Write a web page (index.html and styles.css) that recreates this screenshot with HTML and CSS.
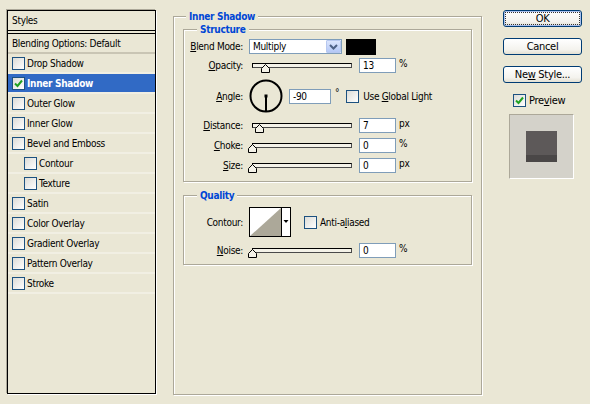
FILE: index.html
```html
<!DOCTYPE html>
<html>
<head>
<meta charset="utf-8">
<title>Layer Style</title>
<link rel="stylesheet" href="styles.css">
</head>
<body>
<div class="dialog">
  <div class="styles-panel">
    <div class="panel-head">Styles</div>
    <div class="panel-sep"></div>
    <div class="row blending">Blending Options: Default</div>
    <div class="row"><span class="cb"></span>Drop Shadow</div>
    <div class="row sel"><span class="cb"><svg width="9" height="9" viewBox="0 0 9 9"><path d="M1 4.5 L3.5 7 L8 1.5" fill="none" stroke="#21a121" stroke-width="2"/></svg></span>Inner Shadow</div>
    <div class="row"><span class="cb"></span>Outer Glow</div>
    <div class="row"><span class="cb"></span>Inner Glow</div>
    <div class="row"><span class="cb"></span>Bevel and Emboss</div>
    <div class="row sub"><span class="cb"></span>Contour</div>
    <div class="row sub"><span class="cb"></span>Texture</div>
    <div class="row"><span class="cb"></span>Satin</div>
    <div class="row"><span class="cb"></span>Color Overlay</div>
    <div class="row"><span class="cb"></span>Gradient Overlay</div>
    <div class="row"><span class="cb"></span>Pattern Overlay</div>
    <div class="row"><span class="cb"></span>Stroke</div>
  </div>

  <fieldset class="group outer">
    <legend>Inner Shadow</legend>
    <fieldset class="group structure">
      <legend>Structure</legend>
      <div class="frow r-blend">
        <span class="lbl"><u>B</u>lend Mode:</span>
        <div class="select"><span class="val">Multiply</span><span class="arrow"><svg width="9" height="6" viewBox="0 0 9 6"><path d="M1 1 L4.5 4.5 L8 1" fill="none" stroke="#4d6185" stroke-width="2"/></svg></span></div>
        <span class="swatch"></span>
      </div>
      <div class="frow r-slider first">
        <span class="lbl"><u>O</u>pacity:</span>
        <div class="slider"><div class="track"></div><svg class="thumb" style="left:9px" width="9" height="9" viewBox="0 0 9 9"><path d="M4.5 0.5 L8.5 4.5 L8.5 8.5 L0.5 8.5 L0.5 4.5 Z" fill="#f4f2e8" stroke="#000"/></svg></div>
        <span class="num">13</span><span class="unit">%</span>
      </div>
      <div class="frow r-angle">
        <span class="lbl"><u>A</u>ngle:</span>
        <svg class="dial" width="34" height="34" viewBox="0 0 34 34"><circle cx="17" cy="17" r="15.5" fill="none" stroke="#000" stroke-width="2"/><line x1="17" y1="17" x2="17" y2="32" stroke="#000" stroke-width="2"/><rect x="15.5" y="15.5" width="3" height="3" fill="#000"/></svg>
        <span class="num wide">-90</span><span class="deg">°</span>
        <span class="cb gl"></span><span class="cblabel">Use <u>G</u>lobal Light</span>
      </div>
      <div class="frow r-slider">
        <span class="lbl"><u>D</u>istance:</span>
        <div class="slider"><div class="track"></div><svg class="thumb" style="left:3px" width="9" height="9" viewBox="0 0 9 9"><path d="M4.5 0.5 L8.5 4.5 L8.5 8.5 L0.5 8.5 L0.5 4.5 Z" fill="#f4f2e8" stroke="#000"/></svg></div>
        <span class="num">7</span><span class="unit">px</span>
      </div>
      <div class="frow r-slider">
        <span class="lbl"><u>C</u>hoke:</span>
        <div class="slider"><div class="track"></div><svg class="thumb" style="left:-4px" width="9" height="9" viewBox="0 0 9 9"><path d="M4.5 0.5 L8.5 4.5 L8.5 8.5 L0.5 8.5 L0.5 4.5 Z" fill="#f4f2e8" stroke="#000"/></svg></div>
        <span class="num">0</span><span class="unit">%</span>
      </div>
      <div class="frow r-slider">
        <span class="lbl"><u>S</u>ize:</span>
        <div class="slider"><div class="track"></div><svg class="thumb" style="left:-4px" width="9" height="9" viewBox="0 0 9 9"><path d="M4.5 0.5 L8.5 4.5 L8.5 8.5 L0.5 8.5 L0.5 4.5 Z" fill="#f4f2e8" stroke="#000"/></svg></div>
        <span class="num">0</span><span class="unit">px</span>
      </div>
    </fieldset>

    <fieldset class="group quality">
      <legend>Quality</legend>
      <div class="frow r-contour">
        <span class="lbl">Contour:</span>
        <svg class="contour" width="42" height="30" viewBox="0 0 42 30"><rect x="0.5" y="0.5" width="41" height="29" fill="#fff" stroke="#000"/><polygon points="1,29 32,1 32,29" fill="#aca899"/><line x1="32.5" y1="1" x2="32.5" y2="29" stroke="#000"/><polygon points="34.5,13 39.5,13 37,16" fill="#000"/></svg>
        <span class="cb aa"></span><span class="cblabel">Anti-a<u>l</u>iased</span>
      </div>
      <div class="frow r-slider noise">
        <span class="lbl"><u>N</u>oise:</span>
        <div class="slider"><div class="track"></div><svg class="thumb" style="left:-4px" width="9" height="9" viewBox="0 0 9 9"><path d="M4.5 0.5 L8.5 4.5 L8.5 8.5 L0.5 8.5 L0.5 4.5 Z" fill="#f4f2e8" stroke="#000"/></svg></div>
        <span class="num">0</span><span class="unit">%</span>
      </div>
    </fieldset>
  </fieldset>

  <div class="side">
    <div class="btn default"><span>OK</span></div>
    <div class="btn">Cancel</div>
    <div class="btn">Ne<u>w</u> Style...</div>
    <div class="preview-check"><span class="cb"><svg width="9" height="9" viewBox="0 0 9 9"><path d="M1 4.5 L3.5 7 L8 1.5" fill="none" stroke="#21a121" stroke-width="2"/></svg></span><span>Pre<u>v</u>iew</span></div>
    <div class="preview"><div class="sample"></div></div>
  </div>
</div>
</body>
</html>
```
FILE: styles.css
```css
* { box-sizing: border-box; }
html, body { margin: 0; padding: 0; }
body {
  width: 590px;
  height: 404px;
  overflow: hidden;
  background: #eae7d5;
  color: #000;
  font-family: Tahoma, "DejaVu Sans Condensed", "Liberation Sans", sans-serif;
  font-size: 10px;
  letter-spacing: -0.3px;
}
u { text-decoration: underline; text-underline-offset: 1px; }

.dialog {
  display: flex;
  align-items: flex-start;
  padding: 10px 0 0 7px;
}

/* ---------- Styles list ---------- */
.styles-panel {
  width: 149px;
  height: 384px;
  border: 1px solid #000;
  box-shadow: 1px 1px 0 #fff, -1px -1px 0 #aca899;
  flex: none;
}
.panel-head {
  height: 20px;
  line-height: 19px;
  padding-left: 4px;
  border-bottom: 1px solid #000;
}
.panel-sep { height: 1px; background: #000; margin-top: 2px; }
.row {
  display: flex;
  align-items: center;
  height: 20px;
  padding-left: 4px;
  border-bottom: 2px solid rgba(255, 255, 255, 0.35);
  white-space: nowrap;
  background-clip: padding-box;
}
.row.blending { border-bottom-color: #c9c5b4; }
.row.sub { padding-left: 16px; }
.row.sel { background-color: #316ac5; color: #fff; font-weight: bold; }

.cb {
  width: 13px;
  height: 13px;
  flex: none;
  border: 1px solid #1c5180;
  background: linear-gradient(135deg, #dcdcd7, #fff);
  margin-right: 2px;
  display: inline-flex;
  align-items: center;
  justify-content: center;
}

/* ---------- Group boxes ---------- */
.group {
  margin: 0;
  padding: 0;
  min-width: 0;
  border: 1px solid #aca899;
  box-shadow: inset 1px 1px 0 #fff, 1px 1px 0 #fff;
}
.group > legend {
  font-weight: bold;
  color: #0046d5;
  line-height: 13px;
  padding: 0 3px;
  background: #eae7d5;
}
.outer {
  flex: none;
  width: 309px;
  height: 385px;
  margin-left: 17px;
}
.outer > legend { margin-left: 12px; }
.structure { margin: 0 9px; padding: 0 0 8px; }
.structure > legend { margin-left: 13px; }
.quality { margin: 7px 9px 0; padding: 0 0 6px; }
.quality > legend { margin-left: 13px; }

/* ---------- Form rows ---------- */
.frow { display: flex; align-items: center; white-space: nowrap; }
.lbl { width: 59px; margin-right: 6px; text-align: right; flex: none; }
.r-blend { height: 16px; margin-top: 3px; align-items: flex-start; }
.r-blend .lbl { line-height: 16px; }
.r-slider { height: 15px; margin-top: 5px; }
.r-slider.first { margin-top: 3px; }
.r-angle { height: 34px; margin-top: 6px; }
.r-contour { height: 30px; margin-top: 5px; }
.r-slider.noise { margin-top: 6px; }

.select {
  width: 93px;
  height: 15px;
  border: 1px solid #7f9db9;
  background: #fff;
  display: flex;
  align-items: center;
  justify-content: space-between;
  padding-left: 3px;
}
.arrow {
  width: 15px;
  height: 13px;
  border: 1px solid #b7c8ef;
  border-radius: 1px;
  background: linear-gradient(#dbe5fd, #b4c8f6);
  display: flex;
  align-items: center;
  justify-content: center;
}
.swatch { width: 30px; height: 16px; background: #000; margin-left: 4px; }

.slider { position: relative; width: 100px; height: 15px; margin-left: 3px; flex: none; }
.track {
  margin-top: 5px;
  height: 5px;
  border: 1px solid #000;
  border-right-color: #4a4a4a;
  border-bottom-color: #4a4a4a;
  background: #f4f2e8;
}
.thumb { position: absolute; top: 6px; }

.num {
  width: 37px;
  height: 15px;
  margin-left: 7px;
  border: 1px solid #7f9db9;
  background: #fff;
  padding-left: 3px;
  line-height: 13px;
  flex: none;
}
.num.wide { width: 42px; margin-left: 6px; }
.unit { margin-left: 3px; align-self: flex-start; line-height: 12px; }
.dial { flex: none; }
.deg { margin-left: 4px; align-self: flex-start; line-height: 16px; margin-top: 6px; }
.cb.gl { margin-left: 7px; margin-right: 4px; }
.contour { flex: none; }
.cb.aa { margin-left: 13px; margin-right: 3px; }

/* ---------- Buttons column ---------- */
.side {
  flex: none;
  width: 79px;
  margin-left: 21px;
  display: flex;
  flex-direction: column;
}
.btn {
  height: 17px;
  border: 1px solid #003c74;
  border-radius: 3px;
  background: linear-gradient(#fff, #f4f3ee 70%, #e3e0d3);
  text-align: center;
  line-height: 15px;
  margin-top: 11px;
  font-size: 11px;
}
.btn.default {
  margin-top: 0;
  box-shadow: inset 0 0 0 1px #a9c0ee;
  padding: 2px;
  line-height: 11px;
}
.btn.default span {
  display: block;
  height: 11px;
  outline: 1px dotted #333;
}
.preview-check {
  display: flex;
  align-items: center;
  height: 13px;
  margin-top: 11px;
  padding-left: 10px;
  font-size: 11px;
}
.preview-check .cb { margin-right: 3px; }
.preview {
  width: 65px;
  height: 65px;
  margin: 7px 0 0 6px;
  background: #d4d2ca;
  border: 1px solid;
  border-color: #aca899 #fff #fff #aca899;
  display: flex;
  align-items: center;
  justify-content: center;
}
.sample {
  width: 31px;
  height: 31px;
  background: linear-gradient(#5d5959 0, #5d5959 76%, #4a4747 76%);
}
```
